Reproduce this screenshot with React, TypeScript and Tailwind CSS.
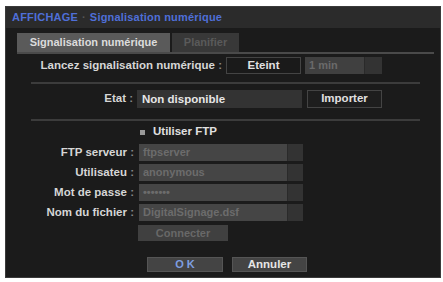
import React from "react";

const font = { fontFamily: '"Liberation Sans", Arial, sans-serif' };

function Field({ label, value }: { label: string; value: string }) {
  return (
    <div className="flex items-center h-[17px]">
      <div className="w-[129px] text-right text-[11.5px] font-bold text-[#d6d6d6] leading-none pr-[1px]">
        {label} <span className="text-[#888]">:</span>
      </div>
      <div className="ml-[4px] flex h-[17px] w-[164px]">
        <div className="flex-1 bg-[#454545] text-[#6c6c6c] text-[11px] leading-[17px] pl-[4px] font-bold">{value}</div>
        <div className="w-[16px] bg-[#333333] border-l border-[#2a2a2a]"></div>
      </div>
    </div>
  );
}

export default function App() {
  return (
    <div className="w-[443px] h-[282px] bg-white pt-[6px] pl-[5px]" style={font}>
      <div className="w-[436px] h-[272px] bg-[#1b1b1b] border border-[#3a3a3a] flex flex-col overflow-hidden">
        <div className="h-[21px] bg-[#2b2b2b] flex items-center pl-[6px] text-[11px] font-bold text-[#4f6fd8] tracking-[0.2px]">
          AFFICHAGE <span className="text-[#555] mx-[4px]">·</span> Signalisation numérique
        </div>
        <div className="pt-[5px] pl-[11px] flex">
          <div className="w-[153px] h-[19px] bg-[#5a5a5a] text-[#dcdcdc] text-[11px] font-bold flex items-center justify-center">
            Signalisation numérique
          </div>
          <div className="ml-[2px] w-[67px] h-[19px] bg-[#383838] text-[#5a5a5a] text-[11px] font-bold flex items-center justify-center">
            Planifier
          </div>
        </div>
        <div className="ml-[11px] w-[417px] h-[2px] bg-[#4a4a4a]"></div>

        <div className="mt-[3px] flex items-center h-[17px]">
          <div className="w-[216px] text-right text-[11.5px] font-bold text-[#d6d6d6]">
            Lancez signalisation numérique <span className="text-[#888]">:</span>
          </div>
          <div className="ml-[4px] w-[75px] h-[17px] border border-[#444] bg-[#1a1a1a] text-[#e0e0e0] text-[11.5px] font-bold flex items-center justify-center">
            Eteint
          </div>
          <div className="ml-[4px] w-[77px] h-[17px] flex">
            <div className="flex-1 bg-[#404040] text-[#6a6a6a] text-[11px] leading-[17px] pl-[4px] font-bold">1 min</div>
            <div className="w-[18px] bg-[#333] border-l border-[#2a2a2a]"></div>
          </div>
        </div>

        <div className="mt-[8px] ml-[25px] w-[389px] h-[2px] bg-[#3c3c3c]"></div>

        <div className="mt-[6px] flex items-center h-[18px]">
          <div className="w-[127px] text-right text-[11.5px] font-bold text-[#d6d6d6]">
            Etat <span className="text-[#888]">:</span>
          </div>
          <div className="ml-[4px] w-[165px] h-[18px] bg-[#333333] text-[#e6e6e6] text-[11.5px] font-bold leading-[18px] pl-[5px]">
            Non disponible
          </div>
          <div className="ml-[5px] w-[75px] h-[18px] border border-[#444] bg-[#1e1e1e] text-[#e0e0e0] text-[11.5px] font-bold flex items-center justify-center">
            Importer
          </div>
        </div>

        <div className="mt-[11px] ml-[25px] w-[389px] h-[2px] bg-[#3c3c3c]"></div>

        <div className="mt-[5px] ml-[134px] flex items-center h-[12px]">
          <div className="w-[5px] h-[5px] bg-[#9a9a9a]"></div>
          <div className="ml-[8px] text-[11.5px] font-bold text-[#e0e0e0]">Utiliser FTP</div>
        </div>

        <div className="mt-[6px] flex flex-col gap-[3px]">
          <Field label="FTP serveur" value="ftpserver" />
          <Field label="Utilisateu" value="anonymous" />
          <Field label="Mot de passe" value="•••••••" />
          <Field label="Nom du fichier" value="DigitalSignage.dsf" />
        </div>

        <div className="mt-[4px] ml-[132px] w-[90px] h-[16px] bg-[#404040] text-[#686868] text-[11px] font-bold flex items-center justify-center">
          Connecter
        </div>

        <div className="mt-[16px] ml-[141px] flex gap-[9px]">
          <div className="w-[76px] h-[15px] bg-[#444] border border-[#555] text-[#7f9fe0] text-[11px] font-bold flex items-center justify-center">
            O K
          </div>
          <div className="w-[75px] h-[15px] bg-[#444] border border-[#555] text-[#e6e6e6] text-[11.5px] font-bold flex items-center justify-center">
            Annuler
          </div>
        </div>
      </div>
    </div>
  );
}
